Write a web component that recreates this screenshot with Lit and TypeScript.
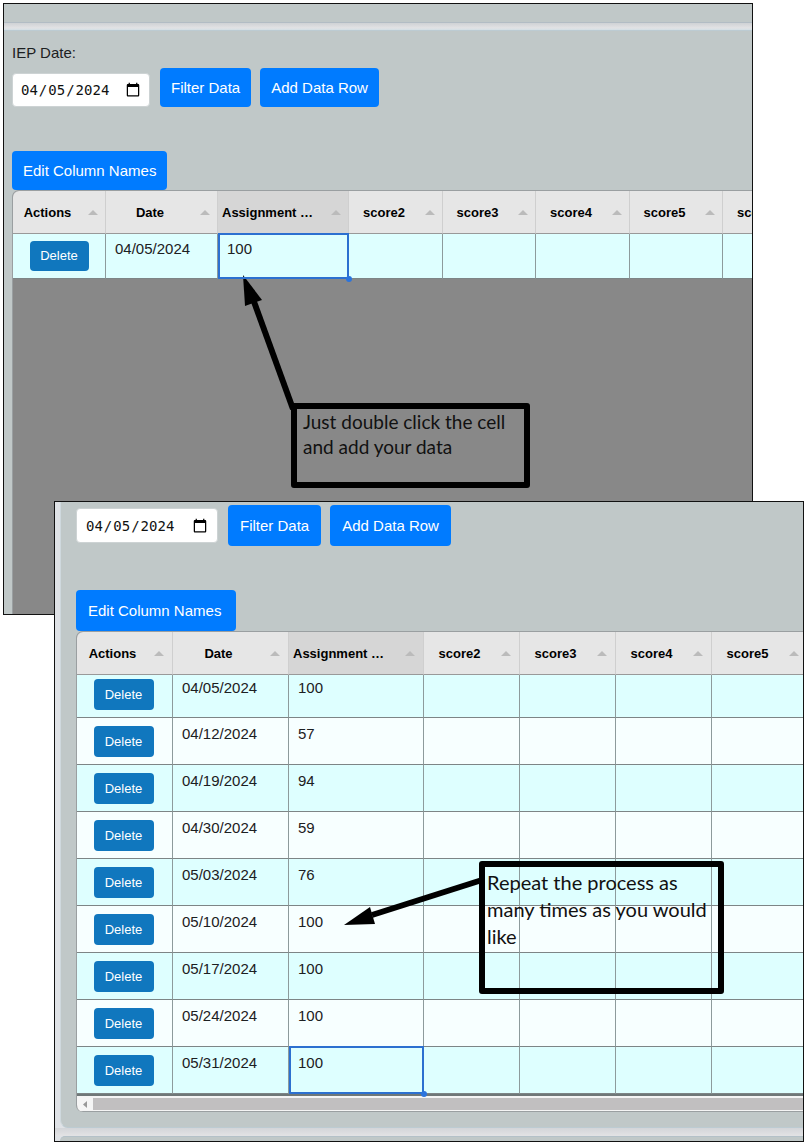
import { LitElement, html, css, nothing } from "lit";
import { customElement, property } from "lit/decorators.js";
import { classMap } from "lit/directives/class-map.js";

interface Row {
  date: string;
  score: string;
  selected?: boolean;
}

const COLUMNS = ["Actions", "Date", "Assignment …", "score2", "score3", "score4", "score5", "score6"];

@customElement("score-window")
class ScoreWindow extends LitElement {
  @property({ attribute: false }) rows: Row[] = [];
  @property({ attribute: false }) widths: number[] = [];
  @property({ type: Boolean, reflect: true }) scrolled = false;

  static styles = css`
    :host {
      display: block;
      position: relative;
      border: 1px solid #111;
      background: #c0c8c8;
      font-family: "Liberation Sans", Arial, sans-serif;
      color: #1c2022;
    }
    * { box-sizing: border-box; }
    button { font: inherit; cursor: pointer; }
    .clip { overflow: hidden; display: flex; flex-direction: column; }
    .strip { height: 18px; }
    .gap {
      height: 9px;
      background: linear-gradient(#cfd2d5, #e2e2e4 70%, #d3dfe5);
      border-top: 1px solid #b2bcc4;
      border-bottom: 1px solid #bccbd2;
    }
    .panel { padding: 12px 0 0 8px; }
    .label { display: block; font-size: 15px; line-height: 20px; margin-bottom: 5px; }
    .controls { display: flex; align-items: flex-end; gap: 9px; }
    .date {
      width: 138px;
      height: 34px;
      margin-right: 1px;
      padding: 0 8px 0 7px;
      border: 1px solid #cdd3d4;
      border-radius: 4px;
      background: #fff;
      color: #111;
      font: 14px "DejaVu Sans Mono", monospace;
    }
    .date::-webkit-calendar-picker-indicator { width: 16px; height: 16px; padding: 0; }
    .primary {
      height: 39px;
      padding: 0 11px;
      border: 0;
      border-radius: 4px;
      background: #007bff;
      color: #fff;
      font-size: 15px;
      text-align: left;
      white-space: nowrap;
    }
    .edit { align-self: flex-start; display: block; margin-top: 44px; }
    .grid {
      border: 1px solid #9a9fa1;
      border-right: 0;
      border-bottom: 0;
      border-top-left-radius: 7px;
      background: #888;
      overflow: hidden;
      min-height: 424px;
    }
    table { border-collapse: separate; border-spacing: 0; table-layout: fixed; width: 0; }
    th {
      height: 43px;
      padding: 0;
      background: #e6e6e6;
      border-right: 1px solid #cfcfcf;
      border-bottom: 1px solid #999;
    }
    th.active { background: #d6d6d6; }
    .sort {
      display: flex;
      align-items: center;
      width: 100%;
      height: 40px;
      padding: 0 7px 0 4px;
      border: 0;
      background: none;
      color: #000;
      font-size: 13px;
      font-weight: bold;
    }
    .title { flex: 1; min-width: 0; white-space: nowrap; text-align: center; }
    .active .title { text-align: left; }
    .tri { flex: none; width: 10px; height: 5px; margin-left: 10px; fill: #bbb; }
    td {
      position: relative;
      height: 45px;
      padding: 6px 9px;
      vertical-align: top;
      background: #deffff;
      border-right: 1px solid #8d9b9c;
      border-bottom: 1px solid #7d8586;
      font-size: 15px;
      line-height: 18px;
    }
    tr:nth-child(even) td { background: #f7ffff; }
    td.action { padding-top: 7px; text-align: center; }
    .delete {
      width: 59px;
      height: 30px;
      padding: 0;
      border: 0;
      border-radius: 4px;
      background: #1077be;
      color: #fff;
      font-size: 13px;
    }
    .sel::before {
      content: "";
      position: absolute;
      inset: -1px -1px -1px 0;
      border: 2px solid #2c70d0;
      z-index: 1;
    }
    .sel::after {
      content: "";
      position: absolute;
      right: -4px;
      bottom: -4px;
      width: 6px;
      height: 6px;
      border-radius: 50%;
      background: #2b74dd;
      z-index: 2;
    }
    .scrollbar {
      display: flex;
      height: 18px;
      padding: 2px 0 1px;
      border-top: 2px solid #6f7778;
      border-bottom: 1px solid #9a9fa1;
      background: #f5f5f5;
    }
    .arrow { width: 16px; height: 13px; padding: 3px 5px; }
    .thumb { flex: 1; background: #c1bfc0; }
    .under { height: 8px; background: linear-gradient(#d3d5d9, #e3e3e5); }
    .next {
      height: 5px;
      margin-left: 5px;
      background: #c0c8c8;
      border-top: 1px solid #b4c1c8;
      border-top-left-radius: 8px;
    }

    :host([scrolled]) .clip { background: #dfe2e6; }
    :host([scrolled]) .panel {
      margin-left: 5px;
      padding: 3px 0 15px 15px;
      background: #c0c8c8;
      border-left: 1px solid #cfd9de;
      border-bottom: 1px solid #bccbd2;
      border-bottom-left-radius: 8px;
    }
    :host([scrolled]) .controls { align-items: center; }
    :host([scrolled]) .date { width: 142px; height: 35px; padding: 0 9px 0 8px; }
    :host([scrolled]) .primary { height: 41px; padding: 0 12px; }
    :host([scrolled]) .edit { min-width: 160px; }
    :host([scrolled]) .grid { min-height: 0; border-bottom-left-radius: 7px; }
    :host([scrolled]) .sort { padding-right: 8px; }
    :host([scrolled]) td { height: 47px; padding-top: 7px; }
    :host([scrolled]) td.action { padding: 8px 9px 0 7px; }
    :host([scrolled]) tr:first-child td { height: 43px; padding-top: 4px; }
    :host([scrolled]) .delete { width: 60px; height: 31px; }
  `;

  private heading(name: string, i: number) {
    return html`<th class=${classMap({ active: i === 2 })} scope="col">
      <button class="sort"><span class="title">${name}</span><svg class="tri" viewBox="0 0 10 5" aria-hidden="true"><path d="M5 0 10 5H0z" /></svg></button>
    </th>`;
  }

  private row(r: Row) {
    return html`<tr>
      <td class="action"><button class="delete">Delete</button></td>
      <td>${r.date}</td>
      <td class=${classMap({ sel: !!r.selected })}>${r.score}</td>
      ${this.widths.slice(3).map(() => html`<td></td>`)}
    </tr>`;
  }

  render() {
    return html`
      <div class="clip">
        ${this.scrolled ? nothing : html`<div class="strip"></div><div class="gap"></div>`}
        <section class="panel">
          ${this.scrolled ? nothing : html`<label class="label" for="iep">IEP Date:</label>`}
          <div class="controls">
            <input class="date" id="iep" type="date" value="2024-04-05" aria-label="IEP Date" />
            <button class="primary">Filter Data</button>
            <button class="primary">Add Data Row</button>
          </div>
          <button class="primary edit">Edit Column Names</button>
          <div class="grid">
            <table>
              <colgroup>${this.widths.map((w) => html`<col style="width:${w}px" />`)}</colgroup>
              <thead><tr>${this.widths.map((_, i) => this.heading(COLUMNS[i], i))}</tr></thead>
              <tbody>${this.rows.map((r) => this.row(r))}</tbody>
            </table>
            ${this.scrolled
              ? html`<div class="scrollbar"><svg class="arrow" viewBox="0 0 6 7" aria-hidden="true"><path d="M5 0v7L1 3.500z" fill="#999" /></svg><div class="thumb"></div></div>`
              : nothing}
          </div>
        </section>
        ${this.scrolled ? html`<div class="under"></div><div class="next"></div>` : nothing}
      </div>
      <slot></slot>
    `;
  }
}

@customElement("app-root")
class AppRoot extends LitElement {
  static styles = css`
    :host { display: block; background: #fff; padding: 3px 1px 1px 3px; }
    .back { margin-right: 51px; }
    .front { margin: -114px 0 0 51px; z-index: 1; }
    .note {
      position: absolute;
      box-sizing: border-box;
      margin: 0;
      border: 6px solid #000;
      border-radius: 3px;
      color: #111;
      font-family: Lato, Carlito, sans-serif;
    }
    .note-cell { left: 287px; top: 399px; width: 239px; height: 85px; padding: 0 6px; font-size: 19px; line-height: 25px; }
    .note-repeat { left: 424px; top: 359px; width: 245px; height: 133px; padding: 2px; font-size: 20px; line-height: 27px; white-space: nowrap; }
    .pointer { position: absolute; overflow: visible; }
    .pointer-cell { left: 239px; top: 271px; width: 50px; height: 134px; }
    .pointer-repeat { left: 289px; top: 375px; width: 138px; height: 50px; }
  `;

  private first: Row[] = [{ date: "04/05/2024", score: "100", selected: true }];

  private all: Row[] = [
    { date: "04/05/2024", score: "100" },
    { date: "04/12/2024", score: "57" },
    { date: "04/19/2024", score: "94" },
    { date: "04/30/2024", score: "59" },
    { date: "05/03/2024", score: "76" },
    { date: "05/10/2024", score: "100" },
    { date: "05/17/2024", score: "100" },
    { date: "05/24/2024", score: "100" },
    { date: "05/31/2024", score: "100", selected: true },
  ];

  render() {
    return html`
      <score-window class="back" .rows=${this.first} .widths=${[93, 112, 131, 94, 93, 94, 93, 94]}>
        <svg class="pointer pointer-cell" viewBox="0 0 50 134" aria-hidden="true">
          <path d="M10 24 50 134" stroke="#000" stroke-width="6" />
          <path d="M0 0 19 25 2 31z" />
        </svg>
        <p class="note note-cell">Just double click the cell<br />and add your data</p>
      </score-window>
      <score-window class="front" scrolled .rows=${this.all} .widths=${[96, 116, 135, 96, 96, 96, 96]}>
        <svg class="pointer pointer-repeat" viewBox="0 0 138 50" aria-hidden="true">
          <path d="M28 38 138 3" stroke="#000" stroke-width="6" />
          <path d="M0 48 26 30 31 47z" />
        </svg>
        <p class="note note-repeat">Repeat the process as<br />many times as you would<br />like</p>
      </score-window>
    `;
  }
}
